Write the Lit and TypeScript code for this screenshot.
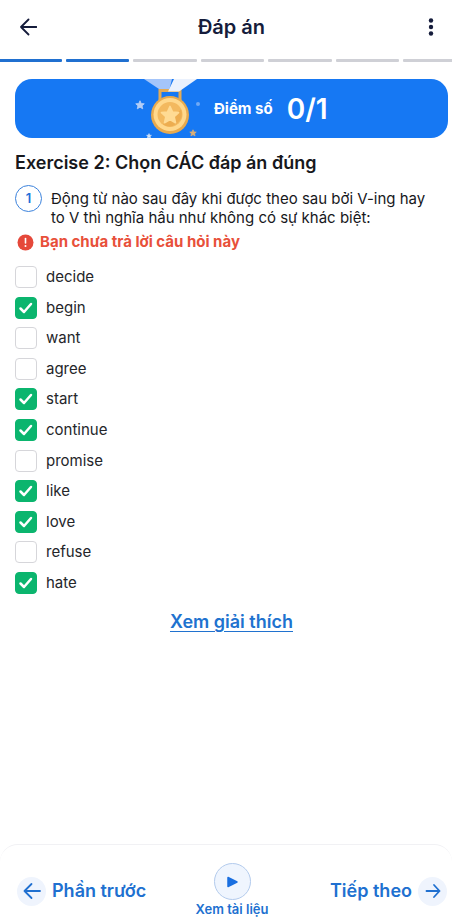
import { LitElement, html, css, svg } from "lit";
import { customElement, property, state } from "lit/decorators.js";
import { classMap } from "lit/directives/class-map.js";

interface Answer {
  word: string;
  correct: boolean;
}

const ANSWERS: Answer[] = [
  { word: "decide", correct: false },
  { word: "begin", correct: true },
  { word: "want", correct: false },
  { word: "agree", correct: false },
  { word: "start", correct: true },
  { word: "continue", correct: true },
  { word: "promise", correct: false },
  { word: "like", correct: true },
  { word: "love", correct: true },
  { word: "refuse", correct: false },
  { word: "hate", correct: true },
];

const STAR =
  "M0-5 1.5-1.7 5-1.4 2.4 1 3.2 4.5 0 2.6-3.2 4.5-2.4 1-5-1.4-1.5-1.7Z";

const star = (x: number, y: number, scale: number, fill: string) =>
  svg`<path d=${STAR} transform="translate(${x} ${y}) scale(${scale})" fill=${fill} stroke=${fill} stroke-width="1" stroke-linejoin="round" />`;

@customElement("score-medal")
export class ScoreMedal extends LitElement {
  static styles = css`
    :host {
      display: block;
      width: 72px;
      height: 59px;
    }
    svg {
      display: block;
    }
  `;

  render() {
    return html`
      <svg width="72" height="59" viewBox="0 0 72 59" aria-hidden="true">
        <path d="M10 0h28l-3 12h-7Z" fill="#a4c5fa" />
        <rect x="26" y="11.5" width="20" height="12" fill="none" stroke="#e5ab54" stroke-width="3" />
        <path d="M40 0h23L45 12.5H34Z" fill="#eaf1fd" />
        <circle cx="36" cy="36" r="19" fill="#e8aa4e" />
        <circle cx="36" cy="35.5" r="16.5" fill="#ffd88c" />
        <circle cx="36" cy="35.5" r="12.5" fill="#f3b95f" />
        <path d="M29 45.5a12.5 12.5 0 0 0 18-15Z" fill="#edad50" />
        ${star(36, 36, 1.7, "#ffdb94")}
        ${star(6, 26, 0.85, "#b4cdf5")}
        ${star(15, 57, 0.5, "#d9e5f5")}
        ${star(59, 54, 0.65, "#dcae74")}
        <circle cx="64" cy="25" r="2" fill="#70a9f5" />
      </svg>
    `;
  }
}

@customElement("answer-option")
export class AnswerOption extends LitElement {
  @property() word = "";
  @property({ type: Boolean }) checked = false;

  static styles = css`
    :host {
      display: block;
    }
    .option {
      display: flex;
      align-items: center;
      gap: 9px;
      width: max-content;
      height: 22px;
      color: #25262a;
      font-size: 15px;
      line-height: 20px;
    }
    .box {
      display: grid;
      width: 22px;
      height: 22px;
    }
    .input,
    .tick {
      grid-area: 1 / 1;
    }
    .input {
      appearance: none;
      box-sizing: border-box;
      width: 22px;
      height: 22px;
      margin: 0;
      border: 1px solid #d6d6da;
      border-radius: 4px;
      background: #fff;
    }
    .input:checked {
      border-color: #0bb56e;
      background: #0bb56e;
    }
    .tick {
      display: none;
      pointer-events: none;
    }
    .input:checked + .tick {
      display: block;
    }
  `;

  render() {
    return html`
      <label class="option">
        <span class="box">
          <input class="input" type="checkbox" .checked=${this.checked} />
          <svg class="tick" width="22" height="22" viewBox="0 0 22 22" fill="none" stroke="#fff"
            stroke-width="2.5" stroke-linecap="round" stroke-linejoin="round" aria-hidden="true">
            <path d="m5.5 11.5 3.5 3.5 7-8" />
          </svg>
        </span>
        <span>${this.word}</span>
      </label>
    `;
  }
}

@customElement("app-root")
export class AppRoot extends LitElement {
  @state() private done = 2;
  private readonly parts = 7;

  static styles = css`
    :host {
      display: flex;
      flex-direction: column;
      min-height: 100vh;
      overflow-x: hidden;
      background: #fff;
      color: #17181c;
      font-family: Inter, "Liberation Sans", sans-serif;
    }
    button {
      padding: 0;
      border: 0;
      background: none;
      font: inherit;
      color: inherit;
      cursor: pointer;
    }
    svg {
      display: block;
    }
    .header {
      display: grid;
      grid-template-columns: 24px 1fr 24px;
      align-items: center;
      height: 54px;
      padding: 0 9px 0 17px;
      color: #151c3b;
    }
    .title {
      margin: 0;
      padding-left: 3px;
      font-size: 20px;
      font-weight: 600;
      line-height: 24px;
      text-align: center;
    }
    .progress {
      display: flex;
      gap: 4px;
      margin: 5px 0 0 -2px;
      overflow: hidden;
    }
    .part {
      flex: 0 0 14%;
      height: 3px;
      border-radius: 1px;
      background: #cfd0d6;
    }
    .part.done {
      background: #2070d0;
    }
    .content {
      padding: 17px 4px 24px 15px;
    }
    .score {
      display: flex;
      align-items: center;
      height: 59px;
      padding-left: 119px;
      border-radius: 17px;
      background: #1678f3;
      color: #fff;
    }
    .score-label {
      margin-left: 8px;
      font-size: 15px;
      font-weight: 700;
      line-height: 20px;
    }
    .score-value {
      margin-left: 14px;
      font-size: 28px;
      font-weight: 600;
      line-height: 32px;
    }
    .exercise {
      margin: 15px 0 12px;
      font-size: 18px;
      font-weight: 600;
      line-height: 20px;
    }
    .question {
      display: flex;
      gap: 9px;
      padding-right: 12px;
      font-size: 15px;
      line-height: 19px;
    }
    .number {
      flex: none;
      box-sizing: border-box;
      width: 27px;
      height: 27px;
      border: 1px solid #3b82dc;
      border-radius: 50%;
      color: #1f6fd8;
      font-size: 13px;
      font-weight: 600;
      line-height: 25px;
      text-align: center;
    }
    .text {
      margin: 4px 0 0;
    }
    .warning {
      display: flex;
      align-items: center;
      gap: 6px;
      margin: 5px 0 14px 2px;
      color: #e8503a;
      font-size: 15px;
      font-weight: 700;
      line-height: 20px;
    }
    .answers {
      display: flex;
      flex-direction: column;
      justify-content: space-between;
      min-height: 328px;
    }
    .explain {
      display: block;
      width: max-content;
      margin: 18px auto 0;
      color: #2072cf;
      font-size: 18px;
      font-weight: 600;
      line-height: 20px;
      text-underline-offset: 3px;
    }
    .footer {
      display: grid;
      grid-template-columns: 1fr auto 1fr;
      align-items: center;
      margin-top: auto;
      padding: 18px 5px 0 17px;
      border-top: 1px solid #f1f1f4;
      border-radius: 18px 18px 0 0;
      color: #2070d0;
      font-weight: 600;
    }
    .step {
      display: flex;
      align-items: center;
      gap: 6px;
      padding-top: 2px;
      font-size: 18px;
      line-height: 20px;
    }
    .next {
      justify-self: end;
    }
    .disc {
      display: grid;
      place-items: center;
      width: 29px;
      height: 29px;
      border-radius: 50%;
      background: #eff4fd;
    }
    .material {
      display: grid;
      justify-items: center;
      gap: 2px;
      font-size: 13px;
      line-height: 15px;
    }
    .play {
      display: grid;
      place-items: center;
      box-sizing: border-box;
      width: 37px;
      height: 37px;
      border: 1px solid #b3cbed;
      border-radius: 50%;
      background: #eff5fe;
    }
  `;

  private arrow(path: string) {
    return html`
      <svg width="20" height="20" viewBox="0 0 20 20" fill="none" stroke="currentColor"
        stroke-width="1.8" stroke-linecap="round" stroke-linejoin="round" aria-hidden="true">
        <path d=${path} />
      </svg>
    `;
  }

  render() {
    const back = "M19.5 10H4M11.5 2.5 4 10l7.5 7.5";
    const left = "M18 10H2.5M9.5 3 2.5 10l7 7";
    const right = "M3.5 10h13M11 4l5.5 6-5.5 6";
    return html`
      <header class="header">
        <button aria-label="Quay lại">${this.arrow(back)}</button>
        <h1 class="title">Đáp án</h1>
        <button aria-label="Thêm">
          <svg width="24" height="24" viewBox="0 0 24 24" fill="currentColor" aria-hidden="true">
            <circle cx="12" cy="5.5" r="2.2" />
            <circle cx="12" cy="12" r="2.2" />
            <circle cx="12" cy="18.5" r="2.2" />
          </svg>
        </button>
      </header>
      <div class="progress" role="progressbar" aria-valuenow=${this.done} aria-valuemax=${this.parts}>
        ${Array.from(
          { length: this.parts },
          (_, i) => html`<span class=${classMap({ part: true, done: i < this.done })}></span>`
        )}
      </div>
      <main class="content">
        <section class="score">
          <score-medal></score-medal>
          <span class="score-label">Điểm số</span>
          <span class="score-value">0/1</span>
        </section>
        <h2 class="exercise">Exercise 2: Chọn CÁC đáp án đúng</h2>
        <div class="question">
          <span class="number">1</span>
          <p class="text">
            Động từ nào sau đây khi được theo sau bởi V-ing hay to V thì nghĩa hầu như không có sự
            khác biệt:
          </p>
        </div>
        <p class="warning">
          <svg width="17" height="17" viewBox="0 0 17 17" aria-hidden="true">
            <circle cx="8.5" cy="8.5" r="8" fill="#e5483a" />
            <path d="M8.5 4.5v4.5" stroke="#fff" stroke-width="1.6" stroke-linecap="round" />
            <circle cx="8.5" cy="12" r="1" fill="#fff" />
          </svg>
          Bạn chưa trả lời câu hỏi này
        </p>
        <div class="answers" role="group" aria-label="Đáp án">
          ${ANSWERS.map(
            (a) => html`<answer-option .word=${a.word} .checked=${a.correct}></answer-option>`
          )}
        </div>
        <a class="explain" href="#">Xem giải thích</a>
      </main>
      <footer class="footer">
        <button class="step">
          <span class="disc">${this.arrow(left)}</span>
          Phần trước
        </button>
        <button class="material">
          <span class="play">
            <svg width="12" height="12" viewBox="0 0 12 12" aria-hidden="true">
              <path d="M2 1.5v9L11 6Z" fill="#1a6fe0" stroke="#1a6fe0" stroke-width="1.5" stroke-linejoin="round" />
            </svg>
          </span>
          Xem tài liệu
        </button>
        <button class="step next">
          Tiếp theo
          <span class="disc">${this.arrow(right)}</span>
        </button>
      </footer>
    `;
  }
}
